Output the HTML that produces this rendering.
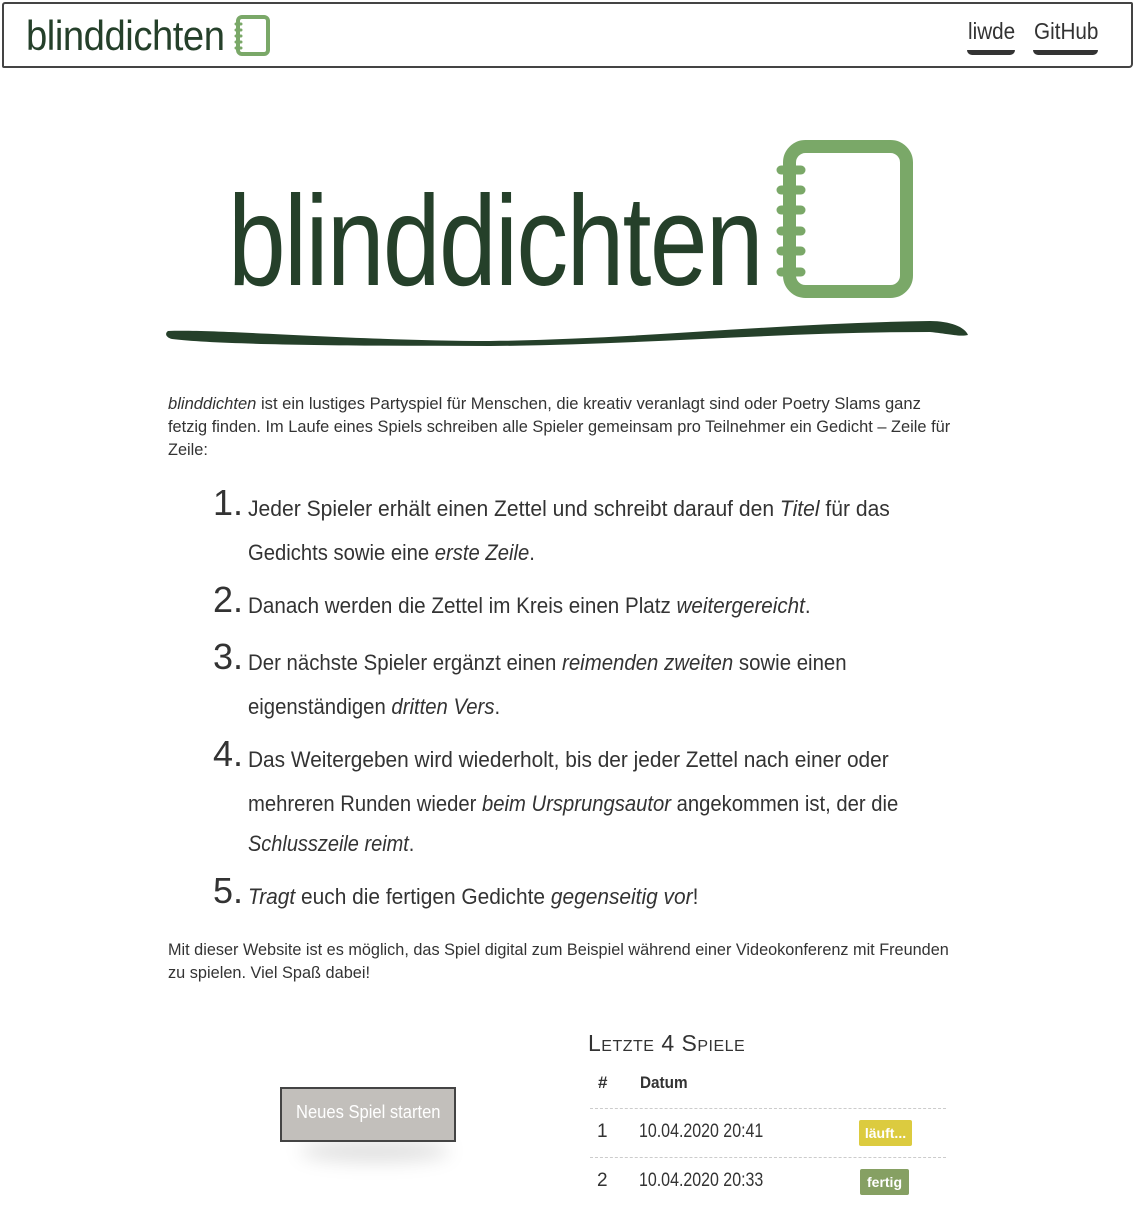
<!DOCTYPE html>
<html><head><meta charset="utf-8"><style>
*{margin:0;padding:0;box-sizing:border-box}
body{width:1135px;height:1219px;background:#fff;position:relative;overflow:hidden;font-family:"Liberation Sans",sans-serif;color:#333}
.a{position:absolute;white-space:nowrap;transform-origin:0 0}
.hdr{position:absolute;left:2px;top:2px;width:1131px;height:66px;border:2px solid #444;border-radius:3px 2px 4px 2px}
.p{font-size:17px;line-height:23px}
.li{font-size:22px}
.n{font-size:36px;color:#333}
i{font-style:italic}
.badge{position:absolute;color:#fff;font-size:14px;font-weight:bold;text-align:center;line-height:26px;border-radius:2px}
.dash{position:absolute;left:590px;width:356px;border-top:1px dashed #ccc}
</style></head><body>
<div class="hdr"></div>
<div class="a" style="left:26px;top:12px;font-size:42px;color:#25402a;letter-spacing:-0.5px;transform:scaleX(0.91)">blinddichten</div>
<svg class="a" style="left:233px;top:14px" width="40" height="44" viewBox="0 0 40 44">
<rect x="5" y="3" width="30" height="37" rx="4" fill="none" stroke="#7aa868" stroke-width="4"/>
<g stroke="#7aa868" stroke-width="3" stroke-linecap="round"><line x1="3" y1="10" x2="8" y2="10"/><line x1="3" y1="16" x2="8" y2="16"/><line x1="3" y1="22" x2="8" y2="22"/><line x1="3" y1="28" x2="8" y2="28"/><line x1="3" y1="34" x2="8" y2="34"/></g></svg>
<div class="a" style="left:968px;top:18px;font-size:23px;color:#333;transform:scaleX(0.9)">liwde</div>
<div class="a" style="left:1034px;top:18px;font-size:23px;color:#333;transform:scaleX(0.9)">GitHub</div>
<div class="a" style="left:967px;top:50px;width:48px;height:5px;background:#333;border-radius:0 0 6px 6px"></div>
<div class="a" style="left:1033px;top:50px;width:65px;height:5px;background:#333;border-radius:0 0 6px 6px"></div>

<div class="a" style="left:228px;top:167px;font-size:128px;color:#25402a;letter-spacing:-2px;line-height:150px;transform:scaleX(0.81)">blinddichten</div>
<svg class="a" style="left:770px;top:135px" width="150" height="170" viewBox="0 0 150 170">
<rect x="19.5" y="11.5" width="117" height="145" rx="16" fill="none" stroke="#7aa868" stroke-width="13"/>
<g stroke="#7aa868" stroke-width="9" stroke-linecap="round"><line x1="11" y1="35" x2="31" y2="35"/><line x1="11" y1="55" x2="31" y2="55"/><line x1="11" y1="75" x2="31" y2="75"/><line x1="11" y1="96" x2="31" y2="96"/><line x1="11" y1="116" x2="31" y2="116"/><line x1="11" y1="137" x2="31" y2="137"/></g></svg>
<svg class="a" style="left:160px;top:315px" width="815" height="40" viewBox="0 0 815 40">
<path d="M8 16 C60 14 200 26 330 26 C480 24 620 8 770 6 C790 6 805 12 808 20 C800 22 790 19 770 17 C620 17 480 30 330 31 C200 31 60 30 12 24 C5 22 5 18 8 16Z" fill="#25402a"/></svg>

<div class="a p" style="left:168px;top:392px;transform:scaleX(0.974)"><i>blinddichten</i> ist ein lustiges Partyspiel für Menschen, die kreativ veranlagt sind oder Poetry Slams ganz</div>
<div class="a p" style="left:168px;top:415px;transform:scaleX(0.964)">fetzig finden. Im Laufe eines Spiels schreiben alle Spieler gemeinsam pro Teilnehmer ein Gedicht – Zeile für</div>
<div class="a p" style="left:168px;top:438px;transform:scaleX(0.96)">Zeile:</div>

<div class="a n" style="left:213px;top:482px">1.</div>
<div class="a li" style="left:248px;top:496px;transform:scaleX(0.958)">Jeder Spieler erhält einen Zettel und schreibt darauf den <i>Titel</i> für das</div>
<div class="a li" style="left:248px;top:540px;transform:scaleX(0.92)">Gedichts sowie eine <i>erste Zeile</i>.</div>
<div class="a n" style="left:213px;top:579px">2.</div>
<div class="a li" style="left:248px;top:593px;transform:scaleX(0.937)">Danach werden die Zettel im Kreis einen Platz <i>weitergereicht</i>.</div>
<div class="a n" style="left:213px;top:636px">3.</div>
<div class="a li" style="left:248px;top:650px;transform:scaleX(0.927)">Der nächste Spieler ergänzt einen <i>reimenden zweiten</i> sowie einen</div>
<div class="a li" style="left:248px;top:694px;transform:scaleX(0.923)">eigenständigen <i>dritten Vers</i>.</div>
<div class="a n" style="left:213px;top:733px">4.</div>
<div class="a li" style="left:248px;top:747px;transform:scaleX(0.948)">Das Weitergeben wird wiederholt, bis der jeder Zettel nach einer oder</div>
<div class="a li" style="left:248px;top:791px;transform:scaleX(0.92)">mehreren Runden wieder <i>beim Ursprungsautor</i> angekommen ist, der die</div>
<div class="a li" style="left:248px;top:831px;transform:scaleX(0.907)"><i>Schlusszeile reimt</i>.</div>
<div class="a n" style="left:213px;top:870px">5.</div>
<div class="a li" style="left:248px;top:884px;transform:scaleX(0.95)"><i>Tragt</i> euch die fertigen Gedichte <i>gegenseitig vor</i>!</div>

<div class="a p" style="left:168px;top:938px;transform:scaleX(0.956)">Mit dieser Website ist es möglich, das Spiel digital zum Beispiel während einer Videokonferenz mit Freunden</div>
<div class="a p" style="left:168px;top:961px;transform:scaleX(0.96)">zu spielen. Viel Spaß dabei!</div>

<div class="a" style="left:300px;top:1140px;width:150px;height:22px;border-radius:50%;background:rgba(0,0,0,0.12);filter:blur(9px)"></div>
<div class="a" style="left:280px;top:1087px;width:176px;height:55px;background:#c2bfbb;border:2px solid #444;"></div>
<div class="a" style="left:296px;top:1102px;color:#fff;font-size:18px;transform:scaleX(0.92)">Neues Spiel starten</div>

<div class="a" style="left:588px;top:1030px;font-size:23px;color:#333;font-variant:small-caps;letter-spacing:0.5px">Letzte 4 Spiele</div>
<div class="a" style="left:598px;top:1073px;font-size:17px;font-weight:bold">#</div>
<div class="a" style="left:640px;top:1073px;font-size:17px;font-weight:bold;transform:scaleX(0.9)">Datum</div>
<div class="dash" style="top:1108px"></div>
<div class="a" style="left:597px;top:1121px;font-size:19px">1</div>
<div class="a" style="left:639px;top:1121px;font-size:19px;transform:scaleX(0.84)">10.04.2020 20:41</div>
<div class="badge" style="left:859px;top:1120px;width:53px;background:#dccb3f">läuft...</div>
<div class="dash" style="top:1157px"></div>
<div class="a" style="left:597px;top:1170px;font-size:19px">2</div>
<div class="a" style="left:639px;top:1170px;font-size:19px;transform:scaleX(0.84)">10.04.2020 20:33</div>
<div class="badge" style="left:860px;top:1169px;width:49px;background:#86a063">fertig</div>
</body></html>
